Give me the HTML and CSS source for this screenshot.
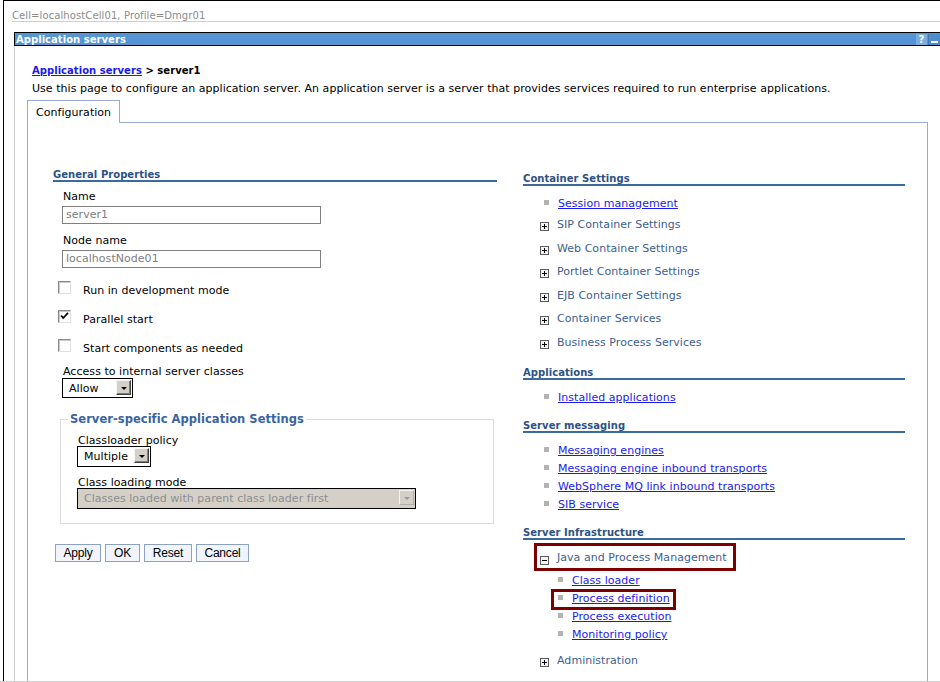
FILE: index.html
```html
<!DOCTYPE html>
<html lang="en">
<head>
<meta charset="utf-8">
<title>Application servers</title>
<link rel="stylesheet" href="styles.css">
</head>
<body>
<div class="page">
  <div class="frame">
    <div class="context">Cell=localhostCell01, Profile=Dmgr01</div>

    <div class="portlet">
      <div class="titlebar">
        <span class="title">Application servers</span>
        <span class="tb-icons">
          <span class="tb-btn help">?</span>
          <span class="tb-btn min"><span class="min-bar"></span></span>
        </span>
      </div>

      <div class="portlet-body">
        <div class="breadcrumb"><a href="#">Application servers</a> &gt; server1</div>
        <p class="intro">Use this page to configure an application server. An application server is a server that provides services required to run enterprise applications.</p>

        <div class="tabs">
          <span class="tab active">Configuration</span>
          <span class="tab-fill"></span>
        </div>

        <div class="tab-panel">
          <div class="columns">
            <!-- general properties form -->
            <div class="col-left">
              <div class="sec-head">General Properties</div>

              <div class="field-label first">Name</div>
              <div class="text-input">server1</div>

              <div class="field-label">Node name</div>
              <div class="text-input">localhostNode01</div>

              <div class="cb-row first">
                <span class="cb"></span>
                <span class="cb-label">Run in development mode</span>
              </div>
              <div class="cb-row">
                <span class="cb checked">
                  <svg width="11" height="11" viewBox="0 0 11 11"><path d="M2 4.5 L4.2 7 L9 1.8" fill="none" stroke="#000" stroke-width="1.7"/></svg>
                </span>
                <span class="cb-label">Parallel start</span>
              </div>
              <div class="cb-row">
                <span class="cb"></span>
                <span class="cb-label">Start components as needed</span>
              </div>

              <div class="field-label access">Access to internal server classes</div>
              <div class="select sel-allow">
                <span class="sel-text">Allow</span>
                <span class="sel-btn"><span class="arrow"></span></span>
              </div>

              <fieldset class="settings">
                <legend>Server-specific Application Settings</legend>
                <div class="fs-body">
                  <div class="fs-label">Classloader policy</div>
                  <div class="select sel-multiple">
                    <span class="sel-text">Multiple</span>
                    <span class="sel-btn"><span class="arrow"></span></span>
                  </div>
                  <div class="fs-label mode">Class loading mode</div>
                  <div class="select sel-mode disabled">
                    <span class="sel-text">Classes loaded with parent class loader first</span>
                    <span class="sel-btn"><span class="arrow"></span></span>
                  </div>
                </div>
              </fieldset>

              <div class="buttons">
                <button class="btn b-apply">Apply</button>
                <button class="btn b-ok">OK</button>
                <button class="btn b-reset">Reset</button>
                <button class="btn b-cancel">Cancel</button>
              </div>
            </div>

            <!-- related items -->
            <div class="col-right">
              <div class="sec-head">Container Settings</div>
              <ul class="links">
                <li class="link-item"><span class="bullet"></span><a href="#">Session management</a></li>
              </ul>
              <ul class="expanders">
                <li class="exp-item"><svg class="pm" width="9" height="9" viewBox="0 0 9 9"><rect x="0.5" y="0.5" width="8" height="8" fill="#f4f4f4" stroke="#5c5c5c"/><path d="M2 4.5H7M4.5 2V7" stroke="#000"/></svg><span>SIP Container Settings</span></li>
                <li class="exp-item"><svg class="pm" width="9" height="9" viewBox="0 0 9 9"><rect x="0.5" y="0.5" width="8" height="8" fill="#f4f4f4" stroke="#5c5c5c"/><path d="M2 4.5H7M4.5 2V7" stroke="#000"/></svg><span>Web Container Settings</span></li>
                <li class="exp-item"><svg class="pm" width="9" height="9" viewBox="0 0 9 9"><rect x="0.5" y="0.5" width="8" height="8" fill="#f4f4f4" stroke="#5c5c5c"/><path d="M2 4.5H7M4.5 2V7" stroke="#000"/></svg><span>Portlet Container Settings</span></li>
                <li class="exp-item"><svg class="pm" width="9" height="9" viewBox="0 0 9 9"><rect x="0.5" y="0.5" width="8" height="8" fill="#f4f4f4" stroke="#5c5c5c"/><path d="M2 4.5H7M4.5 2V7" stroke="#000"/></svg><span>EJB Container Settings</span></li>
                <li class="exp-item"><svg class="pm" width="9" height="9" viewBox="0 0 9 9"><rect x="0.5" y="0.5" width="8" height="8" fill="#f4f4f4" stroke="#5c5c5c"/><path d="M2 4.5H7M4.5 2V7" stroke="#000"/></svg><span>Container Services</span></li>
                <li class="exp-item"><svg class="pm" width="9" height="9" viewBox="0 0 9 9"><rect x="0.5" y="0.5" width="8" height="8" fill="#f4f4f4" stroke="#5c5c5c"/><path d="M2 4.5H7M4.5 2V7" stroke="#000"/></svg><span>Business Process Services</span></li>
              </ul>

              <div class="sec-head next">Applications</div>
              <ul class="links">
                <li class="link-item"><span class="bullet"></span><a href="#">Installed applications</a></li>
              </ul>

              <div class="sec-head next">Server messaging</div>
              <ul class="links">
                <li class="link-item"><span class="bullet"></span><a href="#">Messaging engines</a></li>
                <li class="link-item"><span class="bullet"></span><a href="#">Messaging engine inbound transports</a></li>
                <li class="link-item"><span class="bullet"></span><a href="#">WebSphere MQ link inbound transports</a></li>
                <li class="link-item"><span class="bullet"></span><a href="#">SIB service</a></li>
              </ul>

              <div class="sec-head next">Server Infrastructure</div>
              <div class="exp-open">
                <svg class="pm" width="9" height="9" viewBox="0 0 9 9"><rect x="0.5" y="0.5" width="8" height="8" fill="#f4f4f4" stroke="#5c5c5c"/><path d="M2 4.5H7" stroke="#000"/></svg><span>Java and Process Management</span>
              </div>
              <ul class="links sub">
                <li class="link-item"><span class="bullet"></span><a href="#">Class loader</a></li>
                <li class="link-item marked"><span class="bullet"></span><a href="#">Process definition</a></li>
                <li class="link-item"><span class="bullet"></span><a href="#">Process execution</a></li>
                <li class="link-item"><span class="bullet"></span><a href="#">Monitoring policy</a></li>
              </ul>
              <ul class="expanders last">
                <li class="exp-item"><svg class="pm" width="9" height="9" viewBox="0 0 9 9"><rect x="0.5" y="0.5" width="8" height="8" fill="#f4f4f4" stroke="#5c5c5c"/><path d="M2 4.5H7M4.5 2V7" stroke="#000"/></svg><span>Administration</span></li>
              </ul>
            </div>
          </div>
        </div>
      </div>
    </div>
  </div>
</div>
</body>
</html>
```

FILE: styles.css
```css
*,
*::before,
*::after {
  box-sizing: border-box;
}

html,
body {
  margin: 0;
  padding: 0;
  background: #fff;
}

body {
  font-family: "DejaVu Sans", Verdana, sans-serif;
  font-size: 11px;
  letter-spacing: 0.04px;
  color: #000;
}

a {
  color: #1a1aee;
  text-decoration: underline;
}

ul {
  list-style: none;
  margin: 0;
  padding: 0;
}

/* outer console frame */
.page {
  height: 682px;
  border-bottom: 1px solid #cfcfcf;
  overflow: hidden;
}

.frame {
  height: 100%;
  margin-left: 3px;
  border-left: 1px solid #000;
  border-top: 1px solid #000;
  overflow: hidden;
}

.context {
  margin-left: 8px;
  height: 21px;
  padding-top: 8px;
  line-height: 13px;
  font-size: 10px;
  letter-spacing: 0.1px;
  color: #8c8c8c;
  border-bottom: 1px solid #cfcfcf;
}

/* portlet */
.portlet {
  margin: 10px 0 0 10px;
}

.titlebar {
  display: flex;
  justify-content: space-between;
  height: 14px;
  background: #5595d3;
  border-top: 1px solid #000;
  border-bottom: 1px solid #000;
  border-left: 1px solid #000;
}

.title {
  padding: 1px 0 0 1px;
  line-height: 11px;
  font-size: 10px;
  font-weight: bold;
  color: #fff;
}

.tb-icons {
  display: flex;
  gap: 1px;
  margin-top: 1px;
  height: 11px;
}

.tb-btn {
  display: block;
  height: 11px;
}

.help {
  width: 11px;
  background: #7aaede;
  color: #fff;
  font-weight: bold;
  font-size: 10px;
  line-height: 11px;
  text-align: center;
}

.min {
  width: 12px;
  background: #4f8ccb;
  border-left: 1px solid #3f78b4;
  display: flex;
  align-items: flex-end;
  justify-content: center;
  padding-bottom: 2px;
}

.min-bar {
  width: 7px;
  height: 2px;
  background: #fff;
}

.portlet-body {
  border-left: 1px solid #cfcfcf;
  padding: 18px 0 0 12px;
  min-height: 1000px;
}

.breadcrumb {
  margin-left: 5px;
  line-height: 14px;
  font-size: 10px;
  font-weight: bold;
}

.intro {
  margin: 4px 0 4px 5px;
  line-height: 14px;
}

/* tab strip */
.tabs {
  display: flex;
  width: 901px;
  height: 23px;
}

.tab {
  width: 93px;
  padding: 1px 0 0 8px;
  line-height: 21px;
  border: 1px solid #9aaad6;
  border-bottom: none;
}

.tab-fill {
  flex: 1;
  border-bottom: 1px solid #9aaad6;
}

.tab-panel {
  width: 901px;
  min-height: 1000px;
  border-left: 1px solid #9aaad6;
  border-right: 1px solid #9aaad6;
}

.columns {
  display: grid;
  grid-template-columns: 444px 382px;
  column-gap: 26px;
  padding-left: 25px;
  align-items: start;
}

.sec-head {
  padding-top: 2px;
  line-height: 10px;
  font-size: 10px;
  letter-spacing: 0.05px;
  font-weight: bold;
  color: #2e5282;
  border-bottom: 2px solid #3b6b9e;
}

/* left column form */
.col-left {
  padding-top: 45px;
}

.field-label {
  padding-left: 10px;
  margin-top: 10px;
  line-height: 14px;
}

.field-label.first {
  margin-top: 8px;
}

.text-input {
  width: 259px;
  height: 18px;
  margin: 2px 0 0 9px;
  padding-left: 3px;
  line-height: 16px;
  color: #808080;
  border: 1px solid #7f7f7f;
}

.cb-row {
  display: flex;
  align-items: flex-start;
  margin: 13px 0 0 5px;
}

.cb {
  width: 13px;
  height: 13px;
  margin-right: 12px;
  background: #fff;
  border: 1px solid;
  border-color: #8a8a8a #e2e2e2 #e2e2e2 #8a8a8a;
  box-shadow: inset 1px 1px 0 #c8c8c8;
}

.cb svg {
  display: block;
}

.cb-label {
  margin-top: 3px;
  line-height: 13px;
}

.field-label.access {
  margin-top: 10px;
  line-height: 13px;
}

/* drop-down lists */
.select {
  display: flex;
  align-items: flex-start;
  justify-content: space-between;
  border: 1px solid #000;
  background: #fff;
}

.sel-text {
  padding: 1px 0 0 6px;
  line-height: 17px;
}

.sel-btn {
  display: flex;
  align-items: center;
  justify-content: center;
  width: 15px;
  height: 15px;
  margin: 1px 1px 0 0;
  background: #d4d0c8;
  border: 1px solid;
  border-color: #f4f4f4 #404040 #404040 #f4f4f4;
  box-shadow: inset -1px -1px 0 #808080;
}

.arrow {
  width: 0;
  height: 0;
  margin-top: 2px;
  border-left: 3px solid transparent;
  border-right: 3px solid transparent;
  border-top: 3px solid #000;
}

.sel-allow {
  width: 71px;
  height: 20px;
  margin-left: 9px;
}

.settings {
  width: 434px;
  margin: 13px 0 0 7px;
  padding: 0;
  border: 1px solid #dcdcdc;
}

.settings legend {
  margin-left: 7px;
  padding: 1px 2px 0;
  font-size: 11.5px;
  line-height: 15px;
  font-weight: bold;
  color: #3a64a0;
}

.fs-body {
  padding: 7px 0 14px 16px;
}

.fs-label {
  padding-left: 1px;
  line-height: 13px;
}

.fs-label.mode {
  margin-top: 9px;
}

.sel-multiple {
  width: 74px;
  height: 21px;
  margin-top: -1px;
}

.sel-multiple .sel-text,
.sel-mode .sel-text {
  line-height: 18px;
}

.sel-mode {
  width: 339px;
  height: 21px;
  margin-top: -1px;
}

.select.disabled {
  background: #d4d0c8;
  color: #8e8e8e;
}

.disabled .sel-btn {
  border-color: #f4f4f4 #b0b0b0 #b0b0b0 #f4f4f4;
  box-shadow: none;
}

.disabled .arrow {
  border-top-color: #9a9a9a;
}

/* form buttons */
.buttons {
  display: flex;
  gap: 4px;
  margin: 20px 0 0 2px;
}

.btn {
  height: 18px;
  padding: 0;
  font-family: "Liberation Sans", Arial, sans-serif;
  font-size: 12px;
  letter-spacing: -0.2px;
  color: #000;
  background: #f1f4fa;
  border: 1px solid #8ca2c2;
  border-radius: 0;
}

.b-apply { width: 46px; }
.b-ok { width: 35px; }
.b-reset { width: 48px; }
.b-cancel { width: 53px; }

/* right column: related items */
.col-right {
  padding-top: 49px;
}

.sec-head.next {
  margin-top: 13px;
}

.links {
  margin-top: 8px;
}

.link-item {
  display: flex;
  align-items: flex-start;
  line-height: 18px;
}

.link-item a {
  padding-top: 2px;
  line-height: 16px;
}

.bullet {
  flex: none;
  width: 5px;
  height: 5px;
  margin: 6px 9px 0 21px;
  background: #b3b3b3;
}

.links.sub {
  margin-top: 0;
}

.links.sub .bullet {
  margin-left: 35px;
}

.marked {
  position: relative;
}

/* highlight frame drawn round the selected entry */
.marked::after {
  content: "";
  position: absolute;
  left: 28px;
  top: 0;
  width: 125px;
  height: 21px;
  border: 3px solid #7c0000;
}

.exp-item {
  display: flex;
  align-items: flex-start;
  line-height: 23.5px;
  color: #40608f;
}

.exp-item span {
  padding-top: 2px;
  line-height: 21.5px;
}

.pm {
  flex: none;
  margin: 10px 8px 0 17px;
}

.exp-open {
  display: flex;
  align-items: flex-start;
  width: 202px;
  height: 28px;
  margin: 3px 0 0 11px;
  border: 3px solid #7c0000;
  color: #40608f;
}

.exp-open span {
  padding-top: 2px;
  line-height: 20px;
}

.exp-open .pm {
  margin: 10px 8px 0 3px;
}

.expanders.last {
  margin-top: 5px;
}
```
